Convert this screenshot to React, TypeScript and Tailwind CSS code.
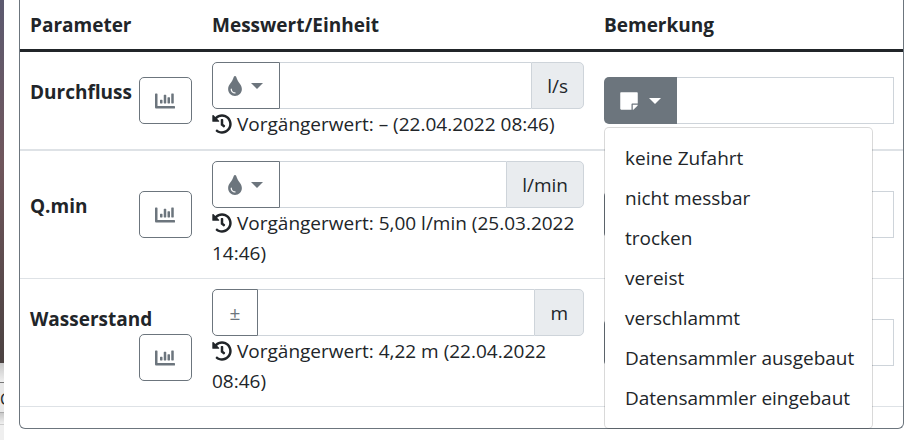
import React, { useState } from 'react'
import { FaChartBar, FaHistory, FaStickyNote, FaTint } from 'react-icons/fa'

type Parameter = {
  id: string
  label: string
  unit: string
  previous: string
  prefix: 'drop' | 'sign'
}

const parameters: Parameter[] = [
  { id: 'durchfluss', label: 'Durchfluss', unit: 'l/s', previous: '– (22.04.2022 08:46)', prefix: 'drop' },
  { id: 'qmin', label: 'Q.min', unit: 'l/min', previous: '5,00 l/min (25.03.2022 14:46)', prefix: 'drop' },
  { id: 'wasserstand', label: 'Wasserstand', unit: 'm', previous: '4,22 m (22.04.2022 08:46)', prefix: 'sign' },
]

const remarks = [
  'keine Zufahrt',
  'nicht messbar',
  'trocken',
  'vereist',
  'verschlammt',
  'Datensammler ausgebaut',
  'Datensammler eingebaut',
]

function Caret() {
  return <span className="border-x-6 border-t-6 border-x-transparent border-t-current" />
}

// Strip of the page behind the dialog
function Backdrop() {
  return (
    <div className="w-1 shrink-0 overflow-hidden bg-[#efefef] text-base" aria-hidden="true">
      <div className="h-[363px] bg-linear-to-b from-[#5c5a70] via-[#70565c] via-45% to-[#4b4241]" />
      <div className="h-5 border-b border-[#777777] bg-linear-to-b from-[#c8c8c8] to-[#f0f0f0]" />
      <div className="h-[30px] border-b border-[#aaaaaa] bg-[#e8e8e8] leading-8">C</div>
      <div className="h-3 border-b border-[#cccccc] bg-linear-to-b from-[#c8c8c8] to-[#f0f0f0]" />
    </div>
  )
}

function ValueInput({ parameter }: { parameter: Parameter }) {
  return (
    <div className="flex h-[47px]">
      {parameter.prefix === 'drop' ? (
        <button
          type="button"
          aria-label="Messmethode"
          className="flex w-17 shrink-0 items-center gap-1.5 rounded-l-[5px] border border-[#6c757d] pl-3 text-[#6c757d]"
        >
          <FaTint className="size-5" />
          <Caret />
        </button>
      ) : (
        <button
          type="button"
          aria-label="Vorzeichen"
          className="w-[46px] shrink-0 rounded-l-[5px] border border-[#6c757d] text-[#6c757d]"
        >
          ±
        </button>
      )}
      <input
        type="text"
        id={parameter.id}
        className="min-w-0 flex-1 border-y border-[#ced4da] bg-white px-4 outline-none"
      />
      <label
        htmlFor={parameter.id}
        className="flex items-center rounded-r-[5px] border border-[#ced4da] bg-[#e9ecef] px-[15px]"
      >
        {parameter.unit}
      </label>
    </div>
  )
}

function RemarkInput({ label, open, onToggle }: { label: string; open: boolean; onToggle: () => void }) {
  const [value, setValue] = useState('')

  return (
    <div className="relative flex h-[47px]">
      <button
        type="button"
        aria-label={`Bemerkung wählen: ${label}`}
        aria-expanded={open}
        onClick={onToggle}
        className="flex w-[73px] shrink-0 items-center gap-2.5 rounded-l-[5px] bg-[#6c757d] pl-[15px] text-white"
      >
        <FaStickyNote className="size-5" />
        <Caret />
      </button>
      <input
        type="text"
        aria-label={`Bemerkung ${label}`}
        value={value}
        onChange={(e) => setValue(e.target.value)}
        className="min-w-0 flex-1 border border-l-0 border-[#ced4da] bg-white px-4 outline-none"
      />
      {open && (
        <ul className="absolute top-full left-0 z-10 mt-[3px] w-[269px] rounded-[5px] border border-black/15 bg-white bg-clip-padding py-[10px]">
          {remarks.map((remark) => (
            <li key={remark}>
              <button
                type="button"
                onClick={() => {
                  setValue(remark)
                  onToggle()
                }}
                className="block h-10 w-full px-5 text-left whitespace-nowrap hover:bg-[#e9ecef]"
              >
                {remark}
              </button>
            </li>
          ))}
        </ul>
      )}
    </div>
  )
}

export default function App() {
  const [openMenu, setOpenMenu] = useState<string | null>('durchfluss')

  return (
    <div className="flex min-h-screen bg-white font-['Open_Sans','Noto_Sans',sans-serif] text-[19px] leading-[30px] text-[#212529]">
      <Backdrop />
      <main className="min-w-0 flex-1 pr-3.5 pl-[15px]">
        <div className="rounded-b-md border-x border-b border-[#6c757d] pb-[21px]">
          <table className="w-full table-fixed border-separate border-spacing-0">
            <colgroup>
              <col className="w-[182px]" />
              <col className="w-[392px]" />
              <col />
            </colgroup>
            <thead>
              <tr className="text-left">
                <th className="border-b-3 border-[#212529] px-2.5 pt-2.5 pb-[9px] font-bold">Parameter</th>
                <th className="border-b-3 border-[#212529] px-2.5 pt-2.5 pb-[9px] font-bold">Messwert/Einheit</th>
                <th className="border-b-3 border-[#212529] px-2.5 pt-2.5 pb-[9px] font-bold">Bemerkung</th>
              </tr>
            </thead>
            <tbody className="[&>tr:first-child>*]:border-b-2">
              {parameters.map((parameter) => (
                <tr key={parameter.id}>
                  <th scope="row" className="border-b border-[#dee2e6] p-2.5 text-left align-middle font-bold">
                    <div className="flex flex-wrap items-start">
                      <span>{parameter.label}</span>
                      <button
                        type="button"
                        aria-label={`Diagramm ${parameter.label}`}
                        className="ml-auto flex h-[47px] w-[53px] items-center rounded-[5px] border border-[#6c757d] pl-[15px] text-[#6c757d]"
                      >
                        <FaChartBar className="size-5" />
                      </button>
                    </div>
                  </th>
                  <td className="border-b border-[#dee2e6] p-2.5 align-middle">
                    <ValueInput parameter={parameter} />
                    <p>
                      <FaHistory className="mr-[5px] inline size-5 align-[-3px]" />
                      {`Vorgängerwert: ${parameter.previous}`}
                    </p>
                  </td>
                  <td className="border-b border-[#dee2e6] py-2.5 pr-[9px] pl-2.5 align-middle">
                    <RemarkInput
                      label={parameter.label}
                      open={openMenu === parameter.id}
                      onToggle={() => setOpenMenu(openMenu === parameter.id ? null : parameter.id)}
                    />
                  </td>
                </tr>
              ))}
            </tbody>
          </table>
        </div>
      </main>
    </div>
  )
}
